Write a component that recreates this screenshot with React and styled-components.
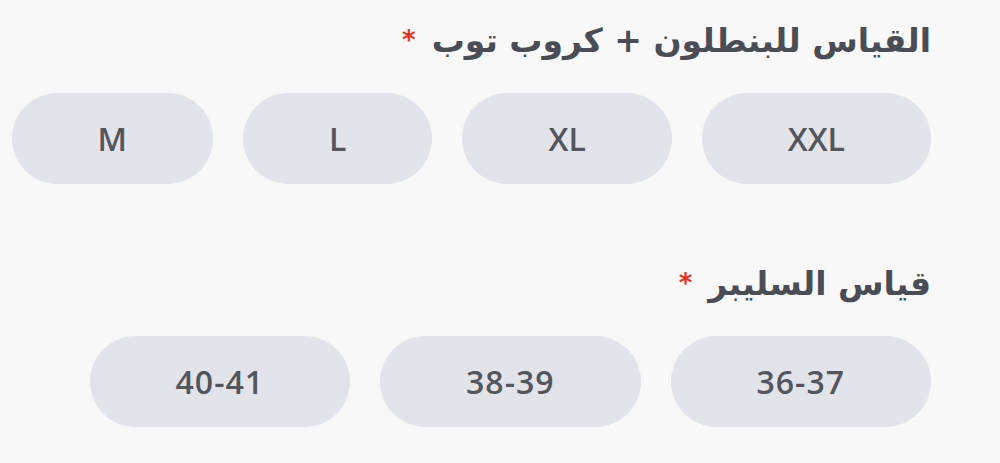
import React from 'react';
import styled, { createGlobalStyle } from 'styled-components';

const GlobalStyle = createGlobalStyle`
  html, body {
    margin: 0;
    background: #f8f8f9;
  }
  body {
    font-family: "Open Sans", "DejaVu Sans", sans-serif;
  }
`;

const Form = styled.div`
  direction: rtl;
  padding: 13px 69px 0 0;
  display: flex;
  flex-direction: column;
  gap: 72px;
`;

const Field = styled.div`
  display: flex;
  flex-direction: column;
`;

const Label = styled.div`
  display: flex;
  align-items: flex-start;
  gap: 16px;
  font-family: "DejaVu Sans", sans-serif;
  font-size: 33px;
  line-height: 56px;
  font-weight: 700;
  color: #4a4d55;
  margin-bottom: 24px;
`;

const Required = styled.span`
  color: #e8331c;
  font-size: 26px;
  line-height: 26px;
  margin-top: 14px;
`;

const Options = styled.div`
  display: flex;
  flex-wrap: wrap;
  gap: 30px;
`;

const Pill = styled.button`
  direction: ltr;
  height: 91px;
  padding: 0 86px;
  border: none;
  border-radius: 46px;
  background: #e3e4e9;
  color: #53565d;
  font-family: "Open Sans", sans-serif;
  font-size: 32px;
  font-weight: 600;
  letter-spacing: ${({ $numeric }) => ($numeric ? '1px' : '0')};
  cursor: pointer;
`;

const fields = [
  { label: 'القياس للبنطلون + كروب توب', options: ['XXL', 'XL', 'L', 'M'] },
  { label: 'قياس السليبر', options: ['36-37', '38-39', '40-41'], numeric: true },
];

const App = () => (
  <>
    <GlobalStyle />
    <Form>
      {fields.map((field) => (
        <Field key={field.label}>
          <Label>
            <span>{field.label}</span>
            <Required>*</Required>
          </Label>
          <Options>
            {field.options.map((opt) => (
              <Pill key={opt} $numeric={field.numeric}>{opt}</Pill>
            ))}
          </Options>
        </Field>
      ))}
    </Form>
  </>
);

export default App;
